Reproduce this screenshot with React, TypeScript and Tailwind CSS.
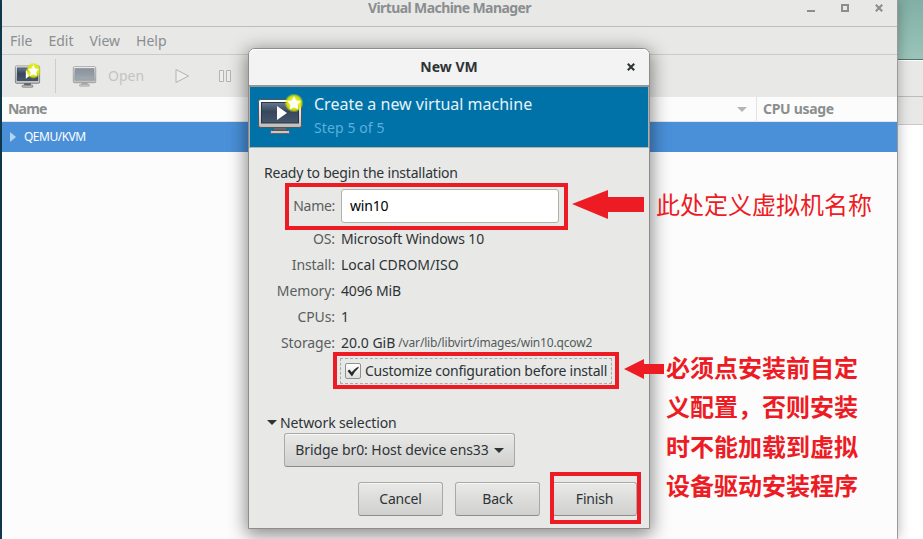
import type { ReactNode } from 'react';

function VmIcon({ className, faded = false, largeStar = false }: { className: string; faded?: boolean; largeStar?: boolean }) {
  return (
    <svg className={className} viewBox="0 0 48 42" preserveAspectRatio="none" overflow="visible">
      <defs>
        <linearGradient id={faded ? 'screen-off' : 'screen'} x1="0" y1="0" x2="0" y2="1">
          <stop offset="0" stopColor={faded ? '#8b929b' : '#69788c'} />
          <stop offset="0.45" stopColor={faded ? '#929aa3' : '#36465b'} />
          <stop offset="1" stopColor={faded ? '#a4abb3' : '#46566b'} />
        </linearGradient>
        <radialGradient id="glow">
          <stop offset="0.5" stopColor="#e9ef10" />
          <stop offset="0.75" stopColor="#dce900" stopOpacity="0.85" />
          <stop offset="1" stopColor="#dce900" stopOpacity="0" />
        </radialGradient>
        <linearGradient id="frame" x1="0" y1="0" x2="0" y2="1">
          <stop offset="0" stopColor="#ffffff" />
          <stop offset="1" stopColor="#bcbcbc" />
        </linearGradient>
      </defs>
      <path d="M18 34h12v4H18z" fill={faded ? '#aaa' : '#666'} />
      <rect x="14.5" y="37.5" width="19" height="3.2" rx="1" fill="#c8c8c8" stroke={faded ? '#999' : '#555'} />
      <rect x="2.5" y="6.5" width="43" height="28" rx="2" fill="url(#frame)" stroke={faded ? '#999' : '#555'} strokeWidth={faded ? 1.6 : 1} />
      <rect x="5.5" y="9.5" width="37" height="20.5" fill={faded ? 'url(#screen-off)' : 'url(#screen)'} stroke={faded ? '#808790' : '#26384b'} />
      {!faded && <path d="M21 13v14l10-7z" fill="#fff" />}
      {!faded && (
        <g transform={largeStar ? 'translate(34.5 14) scale(1.4)' : 'translate(38 10)'}>
          <circle r="9.6" fill="url(#glow)" />
          <path d="M0-7l2.1 4.4 4.9.7-3.5 3.5.8 4.9L0 4.2l-4.3 2.3.8-4.9L-7-1.9l4.9-.7z" fill="#fff" />
        </g>
      )}
    </svg>
  );
}

function Cross({ className }: { className: string }) {
  return (
    <svg className={className} viewBox="0 0 8 8">
      <path d="M.8.8l6.4 6.4M7.2.8L.8 7.2" stroke="currentColor" strokeWidth="2.1" />
    </svg>
  );
}

function Field({ label, className = '', children }: { label: string; className?: string; children: ReactNode }) {
  return (
    <div className="flex h-[26px] items-center whitespace-nowrap">
      <span className="w-[86px] text-right tracking-[-0.1px] text-[#5a5e5d]">{label}</span>
      <span className={`ml-1.5 flex items-center ${className}`}>{children}</span>
    </div>
  );
}

function Button({ className = '', children }: { className?: string; children: ReactNode }) {
  return (
    <button
      className={`flex h-[34px] shrink-0 items-center justify-center rounded-[3px] border border-[#a9aaa7] border-b-[#8c8d8a] bg-linear-to-b from-[#e9e9e8] to-[#d0d0ce] pb-0.5 whitespace-nowrap shadow-[inset_0_1px_#f6f6f5] ${className}`}
    >
      {children}
    </button>
  );
}

function ManagerWindow() {
  return (
    <div className="flex h-full w-[896px] shrink-0 flex-col border-r border-[#999] bg-[#fcfcfc] text-[#8b8e8f] shadow-[0_0_12px_rgba(0,0,0,0.3)]">
      <div className="flex h-[27px] shrink-0 border-b border-[#bdbdbb] bg-[#e8e8e7]">
        <div className="ml-[366px] h-4 w-[180px] text-[14px] leading-4 font-bold tracking-[-0.6px] whitespace-nowrap">Virtual Machine Manager</div>
        <div className="mt-1 ml-auto flex h-2 w-[90px] items-start">
          <span className="mt-1.5 h-0.5 w-2 bg-[#8b8e8f]" />
          <span className="ml-[26px] size-2 border-2 border-[#8b8e8f]" />
          <Cross className="ml-[26px] size-2" />
        </div>
      </div>
      <div className="flex h-7 shrink-0 items-center gap-4 border-b border-[#cbcbca] bg-[#e8e8e7] pl-2 text-[14px]">
        <span>File</span>
        <span>Edit</span>
        <span>View</span>
        <span>Help</span>
      </div>
      <div className="flex h-[42px] shrink-0 items-center bg-[#e8e8e7] text-[#c3c4c3]">
        <VmIcon className="mb-0.5 ml-3 h-[26px] w-[27px]" largeStar />
        <span className="ml-[14px] h-[34px] w-px bg-[#cdcdcc]" />
        <VmIcon className="mb-0.5 ml-4 h-6 w-[25px]" faded />
        <span className="ml-[11px] pb-0.5 text-[14px]">Open</span>
        <svg className="ml-[31px] h-4 w-[15px]" viewBox="0 0 15 16">
          <path d="M1 1.5v13L13.5 8z" fill="#eeeeed" stroke="#b4b5b3" />
        </svg>
        <svg className="ml-[28px] h-[14px] w-[14px]" viewBox="0 0 14 14">
          <path d="M1.5 1.5h4v11h-4zM8.5 1.5h4v11h-4z" fill="#eeeeed" stroke="#b4b5b3" />
        </svg>
      </div>
      <div className="flex h-[25px] shrink-0 items-center border-b border-[#e5e5e5] text-[14px] font-bold">
        <span className="ml-1.5 pb-0.5 tracking-[-0.8px]">Name</span>
        <svg className="ml-auto h-[5px] w-2.5" viewBox="0 0 10 5">
          <path d="M0 0h10L5 5z" fill="#b4b6b5" />
        </svg>
        <div className="ml-[9px] flex h-6 w-[141px] items-center border-l border-[#e3e3e3] pb-0.5 pl-1.5 tracking-[-0.3px]">CPU usage</div>
      </div>
      <div className="flex h-[30px] shrink-0 items-center bg-[#4a90d9] text-[12px] text-white">
        <svg className="ml-2 h-2.5 w-[6px]" viewBox="0 0 6 10">
          <path d="M0 0v10l6-5z" fill="#b7d3f0" />
        </svg>
        <span className="ml-2 tracking-[-0.5px]">QEMU/KVM</span>
      </div>
    </div>
  );
}

function Dialog() {
  return (
    <div className="absolute top-12 left-[248px] flex h-[481px] w-[402px] flex-col rounded-t-[7px] border border-[#8d8d8c] bg-[#e8e8e7] text-[14px] text-[#2e3436] shadow-[0_4px_18px_2px_rgba(0,0,0,0.45)]">
      <div className="flex h-[38px] shrink-0 items-center rounded-t-[6px] border-b-2 border-[#979795] bg-[#f3f3f3] font-bold shadow-[inset_0_1px_#fff]">
        <span className="w-[58px]" />
        <span className="flex-1 pb-0.5 text-center">New VM</span>
        <span className="flex w-[58px] justify-end pr-[14px]"><Cross className="size-2" /></span>
      </div>
      <div className="flex h-[61px] shrink-0 border border-t-0 border-[#b0b1ae] bg-[#0072a8]">
        <VmIcon className="mt-[6px] ml-[6px] h-[42px] w-12" />
        <div className="ml-2.5 flex flex-col whitespace-nowrap">
          <span className="mt-[5px] h-6 text-[16px] leading-6 text-[#e5f2f8]">Create a new virtual machine</span>
          <span className="h-6 leading-6 tracking-[0.1px] text-[#59b0dc]">Step 5 of 5</span>
        </div>
      </div>
      <div className="mt-[13px] ml-[15px] flex h-[22px] shrink-0 items-center tracking-[-0.2px]">Ready to begin the installation</div>
      <div className="mt-[6px] flex h-[34px] shrink-0 items-center">
        <span className="w-[86px] pb-0.5 text-right tracking-[-0.3px] text-[#5a5e5d]">Name:</span>
        <div className="ml-1.5 flex h-[34px] w-[218px] items-center rounded-[3px] border border-[#aeb2a7] bg-white pb-0.5 pl-2 tracking-[-0.2px] text-black">win10</div>
      </div>
      <div className="mt-[2px] flex shrink-0 flex-col">
        <Field label="OS:" className="tracking-[-0.1px]">Microsoft Windows 10</Field>
        <Field label="Install:">Local CDROM/ISO</Field>
        <Field label="Memory:" className="tracking-[-0.15px]">4096 MiB</Field>
        <Field label="CPUs:">1</Field>
        <Field label="Storage:">
          20.0 GiB<span className="ml-[3px] pt-px text-[12px] tracking-[-0.17px] text-[#555a5a]">/var/lib/libvirt/images/win10.qcow2</span>
        </Field>
      </div>
      <div className="mt-[3px] ml-[91px] flex h-[26px] w-[272px] shrink-0 items-center border border-dashed border-[#a8aaa8] pl-1 whitespace-nowrap">
        <span className="flex size-4 shrink-0 items-center justify-center rounded-[2px] border border-[#8f918d] bg-linear-to-b from-white to-[#dededd]">
          <svg className="h-[11px] w-3 shrink-0" viewBox="0 0 12 11">
            <path d="M.5 5l2-1.5 2.2 2.8Q7 3 11.5.5V2Q8 5 5 10.5z" fill="#252b2d" />
          </svg>
        </span>
        <span className="ml-1 pb-0.5 tracking-[-0.23px]">Customize configuration before install</span>
      </div>
      <div className="mt-[27px] ml-[18px] flex h-[22px] shrink-0 items-center">
        <svg className="h-[5px] w-2.5" viewBox="0 0 10 5"><path d="M0 0h10L5 5z" fill="#2e3436" /></svg>
        <span className="ml-[3px] tracking-[-0.12px]">Network selection</span>
      </div>
      <Button className="ml-[35px] w-[231px]">
        <span className="tracking-[-0.08px]">Bridge br0: Host device ens33</span>
        <svg className="mt-0.5 ml-[5px] h-[5px] w-2.5" viewBox="0 0 10 5"><path d="M0 0h10L5 5z" fill="#2e3436" /></svg>
      </Button>
      <div className="mt-[15px] mr-3 flex justify-end gap-3">
        <Button className="w-[85px] tracking-[-0.2px]">Cancel</Button>
        <Button className="w-[85px] tracking-[-0.2px]">Back</Button>
        <Button className="w-[85px] tracking-[-0.2px]">Finish</Button>
      </div>
    </div>
  );
}

function Annotations() {
  return (
    <>
      <div className="absolute top-[183px] left-[285px] h-[47px] w-[283px] border-4 border-[#ed1c24]" />
      <div className="absolute top-[352px] left-[333px] h-[37px] w-[286px] border-4 border-[#ed1c24]" />
      <div className="absolute top-[472px] left-[550px] h-[52px] w-[91px] border-4 border-[#ed1c24]" />
      <svg className="absolute top-[190px] left-[572px] h-[29px] w-[72px]" viewBox="0 0 72 29">
        <path d="M0 14L36 0v7h36v15H36v7z" fill="#ed1c24" />
      </svg>
      <svg className="absolute top-[359px] left-[624px] h-5 w-10" viewBox="0 0 40 20">
        <path d="M0 10L20 0v5h20v10H20v5z" fill="#ed1c24" />
      </svg>
      <div className="absolute top-[188px] left-[656px] font-['Noto_Sans_CJK_SC',sans-serif] text-[24px] leading-8 whitespace-nowrap text-[#ed1c24]">此处定义虚拟机名称</div>
      <div className="absolute top-[347px] left-[666px] font-['Noto_Sans_CJK_SC',sans-serif] text-[24px] leading-[39.4px] font-bold whitespace-nowrap text-[#ed1c24]">
        <div>必须点安装前自定</div>
        <div>义配置，否则安装</div>
        <div>时不能加载到虚拟</div>
        <div>设备驱动安装程序</div>
      </div>
    </>
  );
}

export default function App() {
  return (
    <div className="relative flex h-[539px] w-[923px] overflow-hidden bg-white font-['Noto_Sans',sans-serif]">
      <div className="w-0.5 shrink-0 bg-[#123f56]" />
      <div className="relative z-10 flex"><ManagerWindow /></div>
      <div className="flex flex-1 flex-col">
        <div className="h-[60px] shrink-0 border-b border-[#52706a] bg-linear-to-b from-[#82aea5] to-[#9ac4b9]" />
        <div className="h-[37px] shrink-0 border-t border-b border-t-white border-b-[#bcbcba] bg-[#e8e8e7]" />
        <div className="h-7 shrink-0 border-b border-[#cbcbca] bg-[#e8e8e7]" />
      </div>
      <div className="absolute inset-0 z-20">
        <Dialog />
        <Annotations />
      </div>
    </div>
  );
}
